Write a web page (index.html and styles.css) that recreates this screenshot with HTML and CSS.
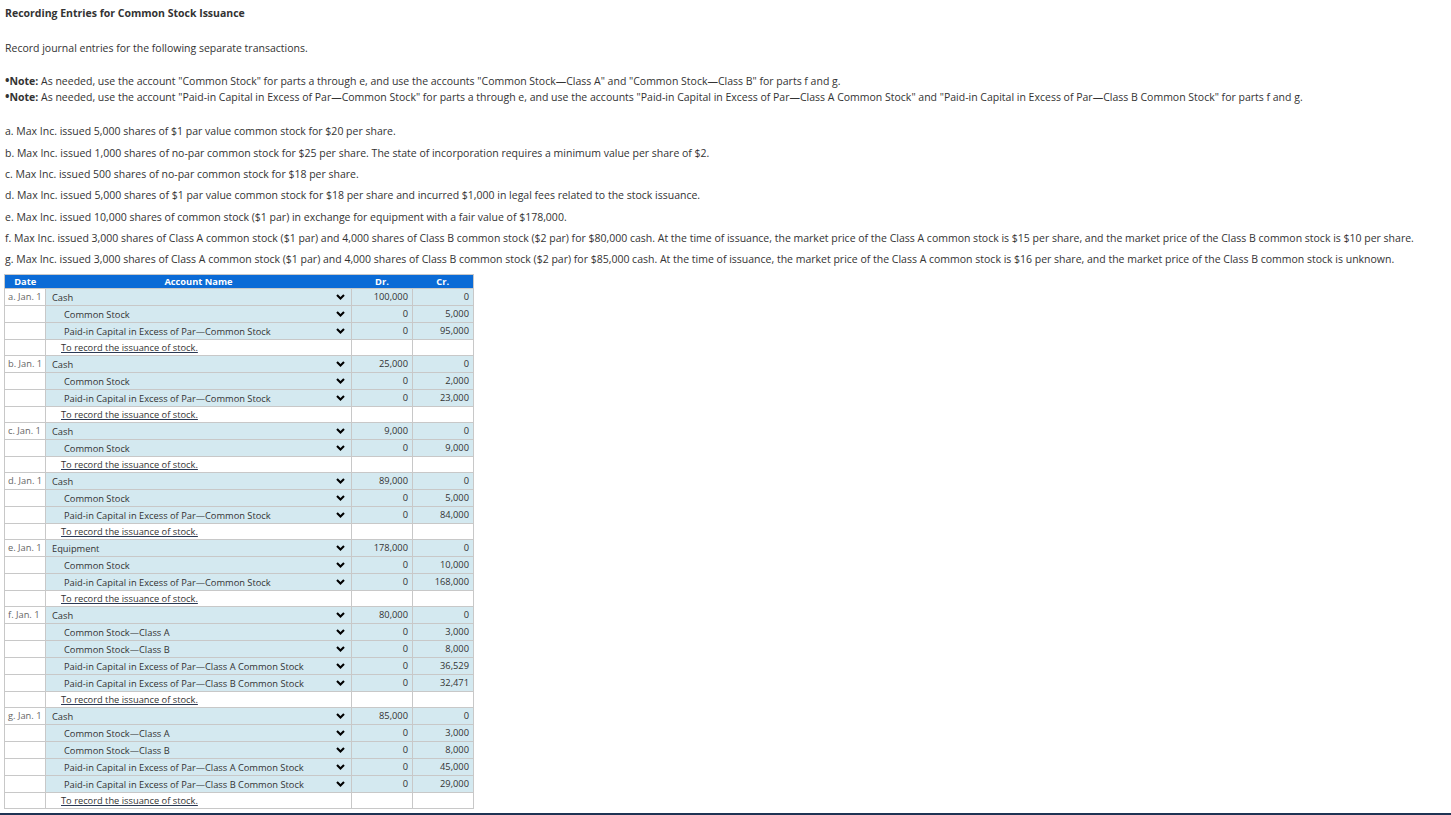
FILE: index.html
```html
<!DOCTYPE html>
<html lang="en">
<head>
  <meta charset="UTF-8">
  <title>Recording Entries for Common Stock Issuance</title>
  <link rel="stylesheet" href="styles.css">
</head>
<body>

<div class="page">
  <h1 class="title">Recording Entries for Common Stock Issuance</h1>

  <p class="intro">Record journal entries for the following separate transactions.</p>

  <div class="notes">
    <p><span class="bullet">&bull;</span><b>Note:</b> As needed, use the account "Common Stock" for parts a through e, and use the accounts "Common Stock&mdash;Class A" and "Common Stock&mdash;Class B" for parts f and g.</p>
    <p><span class="bullet">&bull;</span><b>Note:</b> As needed, use the account "Paid-in Capital in Excess of Par&mdash;Common Stock" for parts a through e, and use the accounts "Paid-in Capital in Excess of Par&mdash;Class A Common Stock" and "Paid-in Capital in Excess of Par&mdash;Class B Common Stock" for parts f and g.</p>
  </div>

  <div class="items">
    <p>a. Max Inc. issued 5,000 shares of $1 par value common stock for $20 per share.</p>
    <p>b. Max Inc. issued 1,000 shares of no-par common stock for $25 per share. The state of incorporation requires a minimum value per share of $2.</p>
    <p>c. Max Inc. issued 500 shares of no-par common stock for $18 per share.</p>
    <p>d. Max Inc. issued 5,000 shares of $1 par value common stock for $18 per share and incurred $1,000 in legal fees related to the stock issuance.</p>
    <p>e. Max Inc. issued 10,000 shares of common stock ($1 par) in exchange for equipment with a fair value of $178,000.</p>
    <p>f. Max Inc. issued 3,000 shares of Class A common stock ($1 par) and 4,000 shares of Class B common stock ($2 par) for $80,000 cash. At the time of issuance, the market price of the Class A common stock is $15 per share, and the market price of the Class B common stock is $10 per share.</p>
    <p>g. Max Inc. issued 3,000 shares of Class A common stock ($1 par) and 4,000 shares of Class B common stock ($2 par) for $85,000 cash. At the time of issuance, the market price of the Class A common stock is $16 per share, and the market price of the Class B common stock is unknown.</p>
  </div>

  <table class="journal">
    <thead>
      <tr>
        <th class="col-date">Date</th>
        <th class="col-acct">Account Name</th>
        <th class="col-num">Dr.</th>
        <th class="col-num">Cr.</th>
      </tr>
    </thead>
    <tbody id="journalBody">
      <!-- entries are filled in by the script below -->
    </tbody>
  </table>
</div>

<div class="footer-bar"></div>

<script>
  const entries = [
    { date: 'a. Jan. 1', lines: [
      ['Cash', '100,000', '0', false],
      ['Common Stock', '0', '5,000', true],
      ['Paid-in Capital in Excess of Par\u2014Common Stock', '0', '95,000', true]
    ]},
    { date: 'b. Jan. 1', lines: [
      ['Cash', '25,000', '0', false],
      ['Common Stock', '0', '2,000', true],
      ['Paid-in Capital in Excess of Par\u2014Common Stock', '0', '23,000', true]
    ]},
    { date: 'c. Jan. 1', lines: [
      ['Cash', '9,000', '0', false],
      ['Common Stock', '0', '9,000', true]
    ]},
    { date: 'd. Jan. 1', lines: [
      ['Cash', '89,000', '0', false],
      ['Common Stock', '0', '5,000', true],
      ['Paid-in Capital in Excess of Par\u2014Common Stock', '0', '84,000', true]
    ]},
    { date: 'e. Jan. 1', lines: [
      ['Equipment', '178,000', '0', false],
      ['Common Stock', '0', '10,000', true],
      ['Paid-in Capital in Excess of Par\u2014Common Stock', '0', '168,000', true]
    ]},
    { date: 'f. Jan. 1', lines: [
      ['Cash', '80,000', '0', false],
      ['Common Stock\u2014Class A', '0', '3,000', true],
      ['Common Stock\u2014Class B', '0', '8,000', true],
      ['Paid-in Capital in Excess of Par\u2014Class A Common Stock', '0', '36,529', true],
      ['Paid-in Capital in Excess of Par\u2014Class B Common Stock', '0', '32,471', true]
    ]},
    { date: 'g. Jan. 1', lines: [
      ['Cash', '85,000', '0', false],
      ['Common Stock\u2014Class A', '0', '3,000', true],
      ['Common Stock\u2014Class B', '0', '8,000', true],
      ['Paid-in Capital in Excess of Par\u2014Class A Common Stock', '0', '45,000', true],
      ['Paid-in Capital in Excess of Par\u2014Class B Common Stock', '0', '29,000', true]
    ]}
  ];

  const chevron = '<svg class="chevron" width="9" height="6" viewBox="0 0 9 6"><path d="M1 1 L4.5 4.5 L8 1" fill="none" stroke="#000" stroke-width="2.1"/></svg>';
  const tbody = document.getElementById('journalBody');

  entries.forEach(function(entry) {
    entry.lines.forEach(function(line, i) {
      const tr = document.createElement('tr');
      tr.className = 'entry-row';
      tr.innerHTML = `
        <td class="date-cell">${i === 0 ? entry.date : ''}</td>
        <td class="acct-cell"><div class="acct-select ${line[3] ? 'credit' : ''}"><span>${line[0]}</span>${chevron}</div></td>
        <td class="num-cell">${line[1]}</td>
        <td class="num-cell">${line[2]}</td>
      `;
      tbody.appendChild(tr);
    });
    const memo = document.createElement('tr');
    memo.className = 'memo-row';
    memo.innerHTML = `
      <td></td>
      <td class="memo-cell"><span>To record the issuance of stock.</span></td>
      <td></td>
      <td></td>
    `;
    tbody.appendChild(memo);
  });
</script>

</body>
</html>
```

FILE: styles.css
```css
* {
  margin: 0;
  padding: 0;
  box-sizing: border-box;
}
body {
  font-family: "Open Sans", Arial, sans-serif;
  font-size: 10.5px;
  color: #333;
  background-color: #fff;
}
.page {
  padding: 0 4px 0 4px;
}
.title {
  margin-top: 5px;
  margin-left: 1px;
  font-size: 10.5px;
  line-height: 16px;
  font-weight: bold;
  color: #333;
}
.intro {
  margin-top: 19px;
  margin-left: 1px;
  line-height: 16px;
}
.notes {
  margin-top: 17px;
  margin-left: 1px;
}
.notes p {
  line-height: 16px;
}
.notes b {
  font-weight: bold;
}
.bullet {
  font-weight: bold;
  font-size: 12px;
}
.items {
  margin-top: 16.3px;
  margin-left: 1px;
}
.items p {
  line-height: 21.33px;
}

/* journal table */
.journal {
  margin-top: 3.3px;
  width: 470px;
  border-collapse: collapse;
  table-layout: fixed;
  border: 1px solid #c8c8c8;
  font-size: 9.3px;
}
.journal th {
  background-color: #0b6bd6;
  color: white;
  font-weight: bold;
  height: 14px;
  line-height: 13px;
  text-align: center;
  font-size: 9.3px;
}
.col-date {
  width: 41px;
}
.col-acct {
  width: 306px;
}
.col-num {
  width: 61px;
}
.journal td {
  border: 1px solid #c8c8c8;
  padding: 0;
}
.entry-row td {
  height: 17px;
}
.memo-row td {
  height: 16px;
}
.date-cell {
  vertical-align: top;
  padding-left: 3px !important;
  padding-top: 1px !important;
  color: #666;
  white-space: nowrap;
}
.acct-cell {
  background-color: #d4e9f0;
  vertical-align: middle;
}
.acct-select {
  display: flex;
  align-items: center;
  justify-content: space-between;
  padding: 2px 6px 0 6px;
}
.acct-select.credit span {
  padding-left: 12px;
}
.chevron {
  display: block;
  margin-top: -2px;
}
.num-cell {
  background-color: #d4e9f0;
  text-align: right;
  vertical-align: top;
  padding-right: 4px !important;
  padding-top: 1px !important;
}
.memo-cell {
  vertical-align: middle;
  padding-left: 15px !important;
}
.memo-cell span {
  text-decoration: underline;
  text-decoration-color: #2b3a55;
}

.footer-bar {
  position: fixed;
  left: 0;
  right: 0;
  bottom: 0;
  height: 2px;
  background-color: #1f3354;
}
```
